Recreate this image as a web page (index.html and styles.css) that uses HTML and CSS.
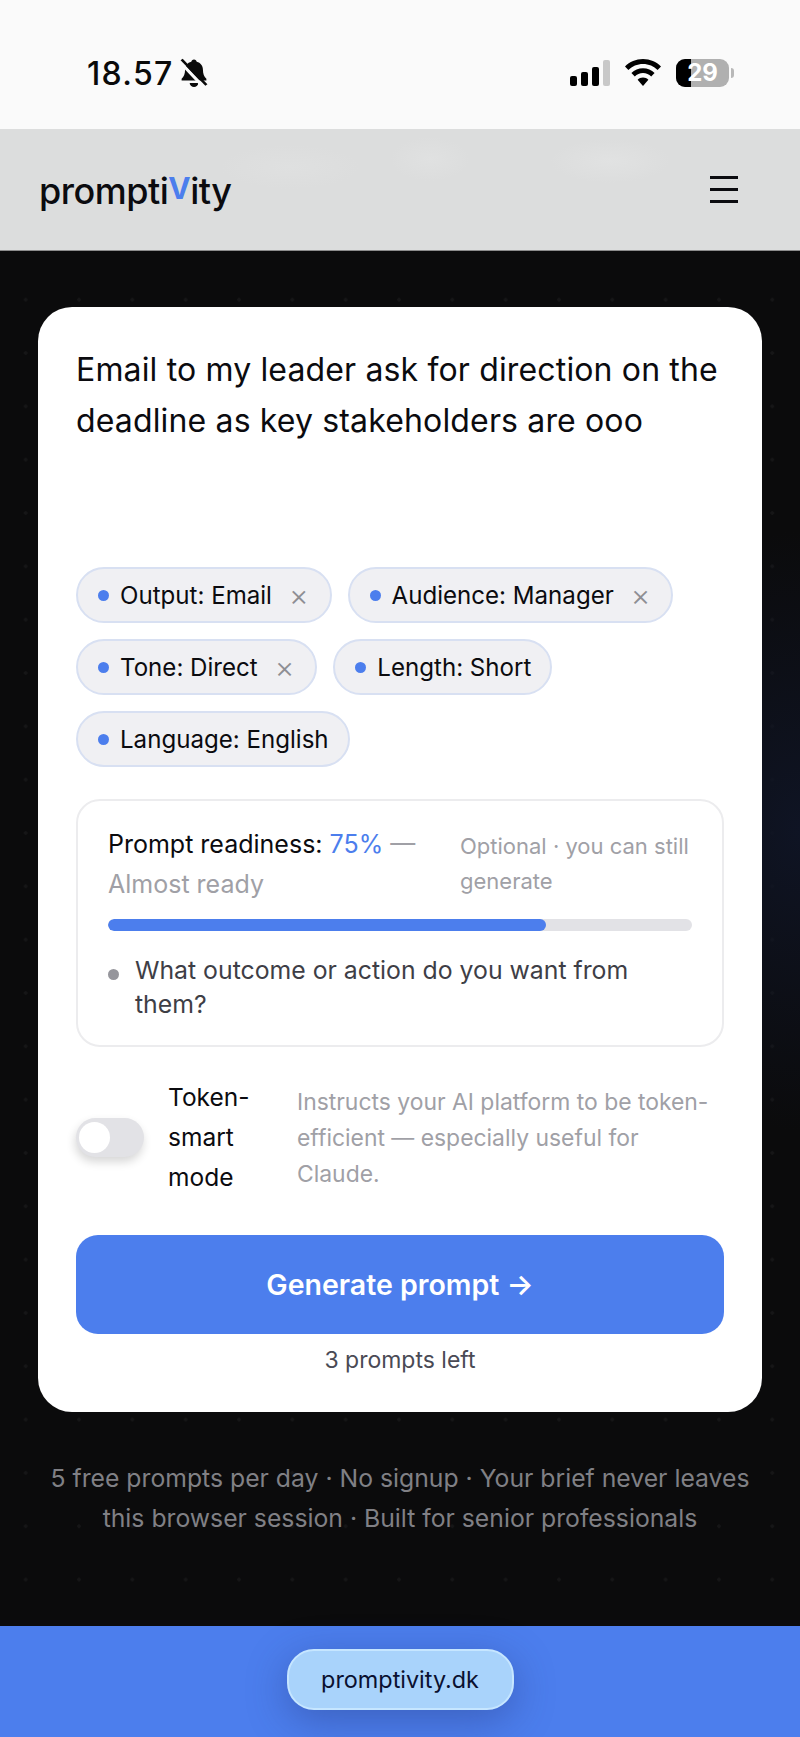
FILE: index.html
```html
<!DOCTYPE html>
<html lang="en">
<head>
    <meta charset="UTF-8">
    <meta name="viewport" content="width=device-width, initial-scale=1.0">
    <title>promptivity</title>
    <link rel="stylesheet" href="styles.css">
</head>
<body>
    <!-- Phone status bar -->
    <div class="status-bar">
        <div class="status-left">
            <span class="clock">18.57</span>
            <svg class="bell" width="28" height="30" viewBox="0 0 26 30" preserveAspectRatio="none">
                <path d="M13 1.500c1.400 0 2.400 1 2.500 2.300 3.700 1 5.800 4 5.800 8 0 4.200 1 6.700 3.200 9v1.700H1.500v-1.700c2.200-2.300 3.200-4.800 3.200-9 0-4 2.100-7 5.800-8C10.600 2.500 11.600 1.500 13 1.500z" fill="#0a0a0a"/>
                <path d="M9 25h8a4 4 0 0 1-8 0z" fill="#0a0a0a"/>
                <path d="M0 4l21 24" stroke="#fafafa" stroke-width="3"/>
                <path d="M1.500 1.500l23 25.500" stroke="#0a0a0a" stroke-width="2.600"/>
            </svg>
        </div>
        <div class="status-right">
            <div class="signal">
                <span class="bar bar-1"></span>
                <span class="bar bar-2"></span>
                <span class="bar bar-3"></span>
                <span class="bar bar-4"></span>
            </div>
            <svg class="wifi" width="36" height="27" viewBox="0 0 36 27">
                <path d="M18 0c7 0 13.400 2.800 18 7.400l-3.400 3.500C28.900 7.200 23.700 4.900 18 4.900S7.100 7.200 3.400 10.900L0 7.400C4.600 2.800 11 0 18 0z" fill="#000"/>
                <path d="M18 9.200c4.500 0 8.600 1.800 11.600 4.800l-3.400 3.500c-2.100-2.100-5-3.400-8.200-3.400s-6.100 1.300-8.200 3.400L6.400 14c3-3 7.100-4.800 11.600-4.800z" fill="#000"/>
                <path d="M18 18.500c2.100 0 4 .8 5.400 2.200L18 27l-5.400-6.300c1.400-1.400 3.300-2.200 5.400-2.200z" fill="#000"/>
            </svg>
            <div class="battery">
                <div class="battery-body"><span class="battery-fill"></span><span class="battery-num">29</span></div>
                <span class="battery-tip"></span>
            </div>
        </div>
    </div>

    <!-- Site header -->
    <header class="site-header">
        <div class="logo">prompti<span class="logo-v">V</span>ity</div>
        <button class="menu-btn" aria-label="Menu">
            <span></span><span></span><span></span>
        </button>
    </header>

    <main class="page">
        <section class="card">
            <p class="brief">Email to my leader ask for direction on the deadline as key stakeholders are ooo</p>

            <div class="chips">
                <div class="chip"><span class="dot"></span>Output: Email<span class="chip-x">&times;</span></div>
                <div class="chip"><span class="dot"></span>Audience: Manager<span class="chip-x">&times;</span></div>
                <div class="chip"><span class="dot"></span>Tone: Direct<span class="chip-x">&times;</span></div>
                <div class="chip"><span class="dot"></span>Length: Short</div>
                <div class="chip"><span class="dot"></span>Language: English</div>
            </div>

            <div class="readiness">
                <div class="readiness-head">
                    <div class="readiness-title">
                        <div>Prompt readiness: <span class="pct">75%</span> <span class="muted">&mdash;</span></div>
                        <div class="muted">Almost ready</div>
                    </div>
                    <div class="readiness-note">Optional &middot; you can still generate</div>
                </div>
                <div class="progress"><div class="progress-fill" style="width: 75%"></div></div>
                <div class="question"><span class="question-dot"></span><span>What outcome or action do you want from them?</span></div>
            </div>

            <div class="token-row">
                <div class="toggle"><span class="knob"></span></div>
                <div class="token-label">Token-smart mode</div>
                <div class="token-desc">Instructs your AI platform to be token-efficient &mdash; especially useful for Claude.</div>
            </div>

            <button class="generate">Generate prompt &rarr;</button>
            <div class="left-count">3 prompts left</div>
        </section>

        <p class="foot-note">5 free prompts per day &middot; No signup &middot; Your brief never leaves this browser session &middot; Built for senior professionals</p>
    </main>

    <!-- Browser address pill -->
    <div class="url-bar">
        <div class="url-pill">promptivity.dk</div>
    </div>
</body>
</html>
```

FILE: styles.css
```css
* {
    box-sizing: border-box;
}
body {
    margin: 0;
    width: 800px;
    height: 1737px;
    overflow: hidden;
    background: #0b0b0c;
    font-family: Inter, "Liberation Sans", sans-serif;
    color: #0b0b0f;
}

/* status bar */
.status-bar {
    height: 129px;
    background: #fafafa;
    padding: 58px 66px 0 87px;
    display: flex;
    justify-content: space-between;
    align-items: flex-start;
}
.status-left {
    display: flex;
    align-items: center;
    gap: 6px;
    height: 30px;
}
.clock {
    font-size: 32px;
    font-weight: 500;
    letter-spacing: 1.300px;
    color: #0a0a0a;
}
.status-right {
    display: flex;
    align-items: center;
    height: 29px;
}
.signal {
    display: flex;
    align-items: flex-end;
    gap: 4px;
    height: 26px;
    margin-right: 15px;
}
.bar {
    width: 7px;
    border-radius: 2px;
    background: #000;
}
.bar-1 { height: 10px; }
.bar-2 { height: 14px; }
.bar-3 { height: 19px; }
.bar-4 { height: 26px; background: #c8c8c8; }
.wifi {
    margin-right: 15px;
}
.battery {
    display: flex;
    align-items: center;
    gap: 2px;
}
.battery-body {
    position: relative;
    width: 53px;
    height: 28px;
    border-radius: 9px;
    background: #b0b0b0;
    overflow: hidden;
    text-align: center;
}
.battery-fill {
    position: absolute;
    left: 0;
    top: 0;
    bottom: 0;
    width: 15px;
    background: #000;
}
.battery-num {
    position: relative;
    font-size: 24px;
    line-height: 28px;
    font-weight: 700;
    color: #fff;
}
.battery-tip {
    width: 3px;
    height: 10px;
    border-radius: 0 3px 3px 0;
    background: #b8b8b8;
}

/* header */
.site-header {
    height: 122px;
    background:
        radial-gradient(ellipse 60px 22px at 610px 32px, #e1e2e2, transparent),
        radial-gradient(ellipse 40px 22px at 430px 30px, #e0e1e1, transparent),
        radial-gradient(ellipse 70px 22px at 290px 38px, #dfe0e0, transparent),
        #dcdddd;
    border-bottom: 1px solid #8c8c8c;
    padding: 0 62px 0 39px;
    display: flex;
    justify-content: space-between;
    align-items: center;
}
.logo {
    font-size: 36px;
    font-weight: 500;
    letter-spacing: -0.500px;
    color: #0b0b0f;
    margin-top: 2px;
}
.logo-v {
    color: #4c7eed;
    font-size: 30px;
    font-weight: 700;
    position: relative;
    top: -5px;
}
.menu-btn {
    width: 28px;
    padding: 0;
    border: none;
    background: none;
    display: flex;
    flex-direction: column;
    gap: 9px;
}
.menu-btn span {
    display: block;
    height: 3px;
    background: #0b0b0f;
}

/* main area */
.page {
    height: 1375px;
    padding: 56px 38px 0;
    background:
        radial-gradient(ellipse 200px 300px at 800px 580px, #0f1424, transparent),
        radial-gradient(circle, #161617 1.500px, transparent 2px) -1px 22px / 53.330px 53.330px,
        #0b0b0c;
}
.card {
    height: 1105px;
    background: #fff;
    border-radius: 34px;
    padding: 38px;
}
.brief {
    margin: 0;
    height: 222px;
    font-size: 32px;
    line-height: 50.500px;
    letter-spacing: 0.150px;
    color: #0b0b0f;
}

/* chips */
.chips {
    display: flex;
    flex-wrap: wrap;
    gap: 16px;
}
.chip {
    height: 56px;
    padding: 0 19px 0 20px;
    display: flex;
    align-items: center;
    border: 2px solid #d8e0f2;
    border-radius: 28px;
    background: #f0f0f3;
    font-size: 24.100px;
    font-weight: 400;
    color: #0b0b0f;
}
.dot {
    width: 11px;
    height: 11px;
    border-radius: 50%;
    background: #4c7eed;
    margin-right: 11px;
}
.chip-x {
    margin-left: 17px;
    margin-right: 2px;
    font-size: 30px;
    font-weight: 300;
    line-height: 1;
    color: #8e8e93;
}

/* readiness box */
.readiness {
    margin-top: 32px;
    height: 248px;
    border: 2px solid #ececee;
    border-radius: 24px;
    padding: 23px 30px 0;
}
.readiness-head {
    display: flex;
    gap: 28px;
    height: 95px;
}
.readiness-title {
    flex: 1;
    font-size: 25px;
    line-height: 40px;
    font-weight: 400;
}
.pct {
    color: #4c7eed;
}
.muted {
    color: #a0a0a6;
}
.readiness-note {
    width: 232px;
    padding-top: 5px;
    font-size: 22px;
    line-height: 35px;
    color: #a0a0a6;
}
.progress {
    height: 12px;
    border-radius: 6px;
    background: #e2e2e6;
    overflow: hidden;
}
.progress-fill {
    height: 100%;
    border-radius: 6px;
    background: #4c7eed;
}
.question {
    display: flex;
    gap: 16px;
    margin-top: 22px;
    font-size: 24.800px;
    line-height: 34px;
    color: #3e3e46;
}
.question-dot {
    flex: none;
    width: 11px;
    height: 11px;
    margin-top: 16px;
    border-radius: 50%;
    background: #96969c;
}

/* token smart row */
.token-row {
    display: flex;
    align-items: center;
    margin-top: 30px;
    height: 120px;
}
.toggle {
    flex: none;
    width: 68px;
    height: 39px;
    padding: 4px 3px;
    border-radius: 20px;
    background: #e2e2e6;
    box-shadow: -1px 5px 10px rgba(0, 0, 0, 0.16);
}
.knob {
    display: block;
    width: 31px;
    height: 31px;
    border-radius: 50%;
    background: #fff;
}
.token-label {
    flex: none;
    width: 84px;
    margin: 0 45px 0 24px;
    font-size: 24.500px;
    line-height: 40px;
    font-weight: 400;
}
.token-desc {
    flex: 1;
    padding-top: 1px;
    font-size: 22.900px;
    line-height: 36px;
    color: #a0a0a6;
}

/* generate */
.generate {
    display: block;
    width: 100%;
    height: 99px;
    margin-top: 38px;
    border: none;
    border-radius: 22px;
    background: #4c7eed;
    color: #fff;
    font-family: inherit;
    font-size: 28.500px;
    font-weight: 600;
}
.left-count {
    margin-top: 12px;
    text-align: center;
    font-size: 23px;
    line-height: 28px;
    color: #4a4a55;
}

/* footer note */
.foot-note {
    margin: 46px 0 0;
    text-align: center;
    font-size: 24.750px;
    line-height: 40px;
    color: #808085;
}

/* blue address bar */
.url-bar {
    height: 111px;
    background: #4c7eed;
    padding-top: 23px;
    display: flex;
    justify-content: center;
    align-items: flex-start;
}
.url-pill {
    width: 227px;
    height: 61px;
    border: 2px solid #c6e6ff;
    border-radius: 27px;
    background: #a9d3fb;
    box-shadow: 0 10px 40px rgba(40, 60, 130, 0.45);
    text-align: center;
    font-size: 23.400px;
    font-weight: 400;
    line-height: 57px;
    color: #0a1030;
}
```
